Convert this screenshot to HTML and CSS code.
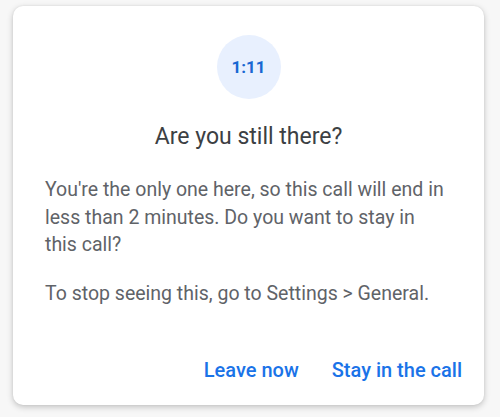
FILE: index.html
```html
<!DOCTYPE html>
<html>
<head>
<meta charset="utf-8">
<link rel="stylesheet" href="styles.css">
</head>
<body>
<div class="dialog">
  <div class="timer"><span>1:11</span></div>
  <h1 class="title">Are you still there?</h1>
  <p class="text">You're the only one here, so this call will end in less than 2 minutes. Do you want to stay in this call?</p>
  <p class="text second">To stop seeing this, go to Settings &gt; General.</p>
  <div class="actions">
    <button class="btn">Leave now</button>
    <button class="btn">Stay in the call</button>
  </div>
</div>
</body>
</html>
```
FILE: styles.css
```css
html, body {
  margin: 0;
  padding: 0;
  background: #f7f7f7;
  width: 500px;
  height: 417px;
  overflow: hidden;
}
body {
  padding: 6px 16px 0 13px;
  box-sizing: border-box;
  font-family: Roboto, "Noto Sans", sans-serif;
}
.dialog {
  width: 471px;
  height: 399px;
  box-sizing: border-box;
  background: #fff;
  border-radius: 10px;
  box-shadow: 0 2px 6px rgba(0,0,0,0.22), 0 0 2px rgba(0,0,0,0.08);
  padding: 29px 22px 0 22px;
  display: flex;
  flex-direction: column;
}
.timer {
  align-self: center;
  width: 64px;
  height: 64px;
  border-radius: 50%;
  background: #e8f0fe;
  display: flex;
  align-items: center;
  justify-content: center;
  color: #1967d2;
  font-weight: 700;
  font-size: 17px;
}
.title {
  margin: 23px 0 0 0;
  text-align: center;
  font-size: 23px;
  font-weight: 400;
  color: #3c4043;
  line-height: 30px;
}
.text {
  margin: 24px 0 0 10px;
  max-width: 405px;
  font-size: 19.5px;
  line-height: 27.5px;
  color: #5f6368;
}
.text.second {
  margin-top: 21.5px;
}
.actions {
  margin-top: auto;
  margin-bottom: 23px;
  display: flex;
  justify-content: flex-end;
  gap: 33px;
}
.btn {
  border: none;
  background: none;
  padding: 0;
  font-family: Roboto, "Noto Sans", sans-serif;
  font-size: 20px;
  font-weight: 500;
  color: #1a73e8;
  line-height: 24px;
}
```
